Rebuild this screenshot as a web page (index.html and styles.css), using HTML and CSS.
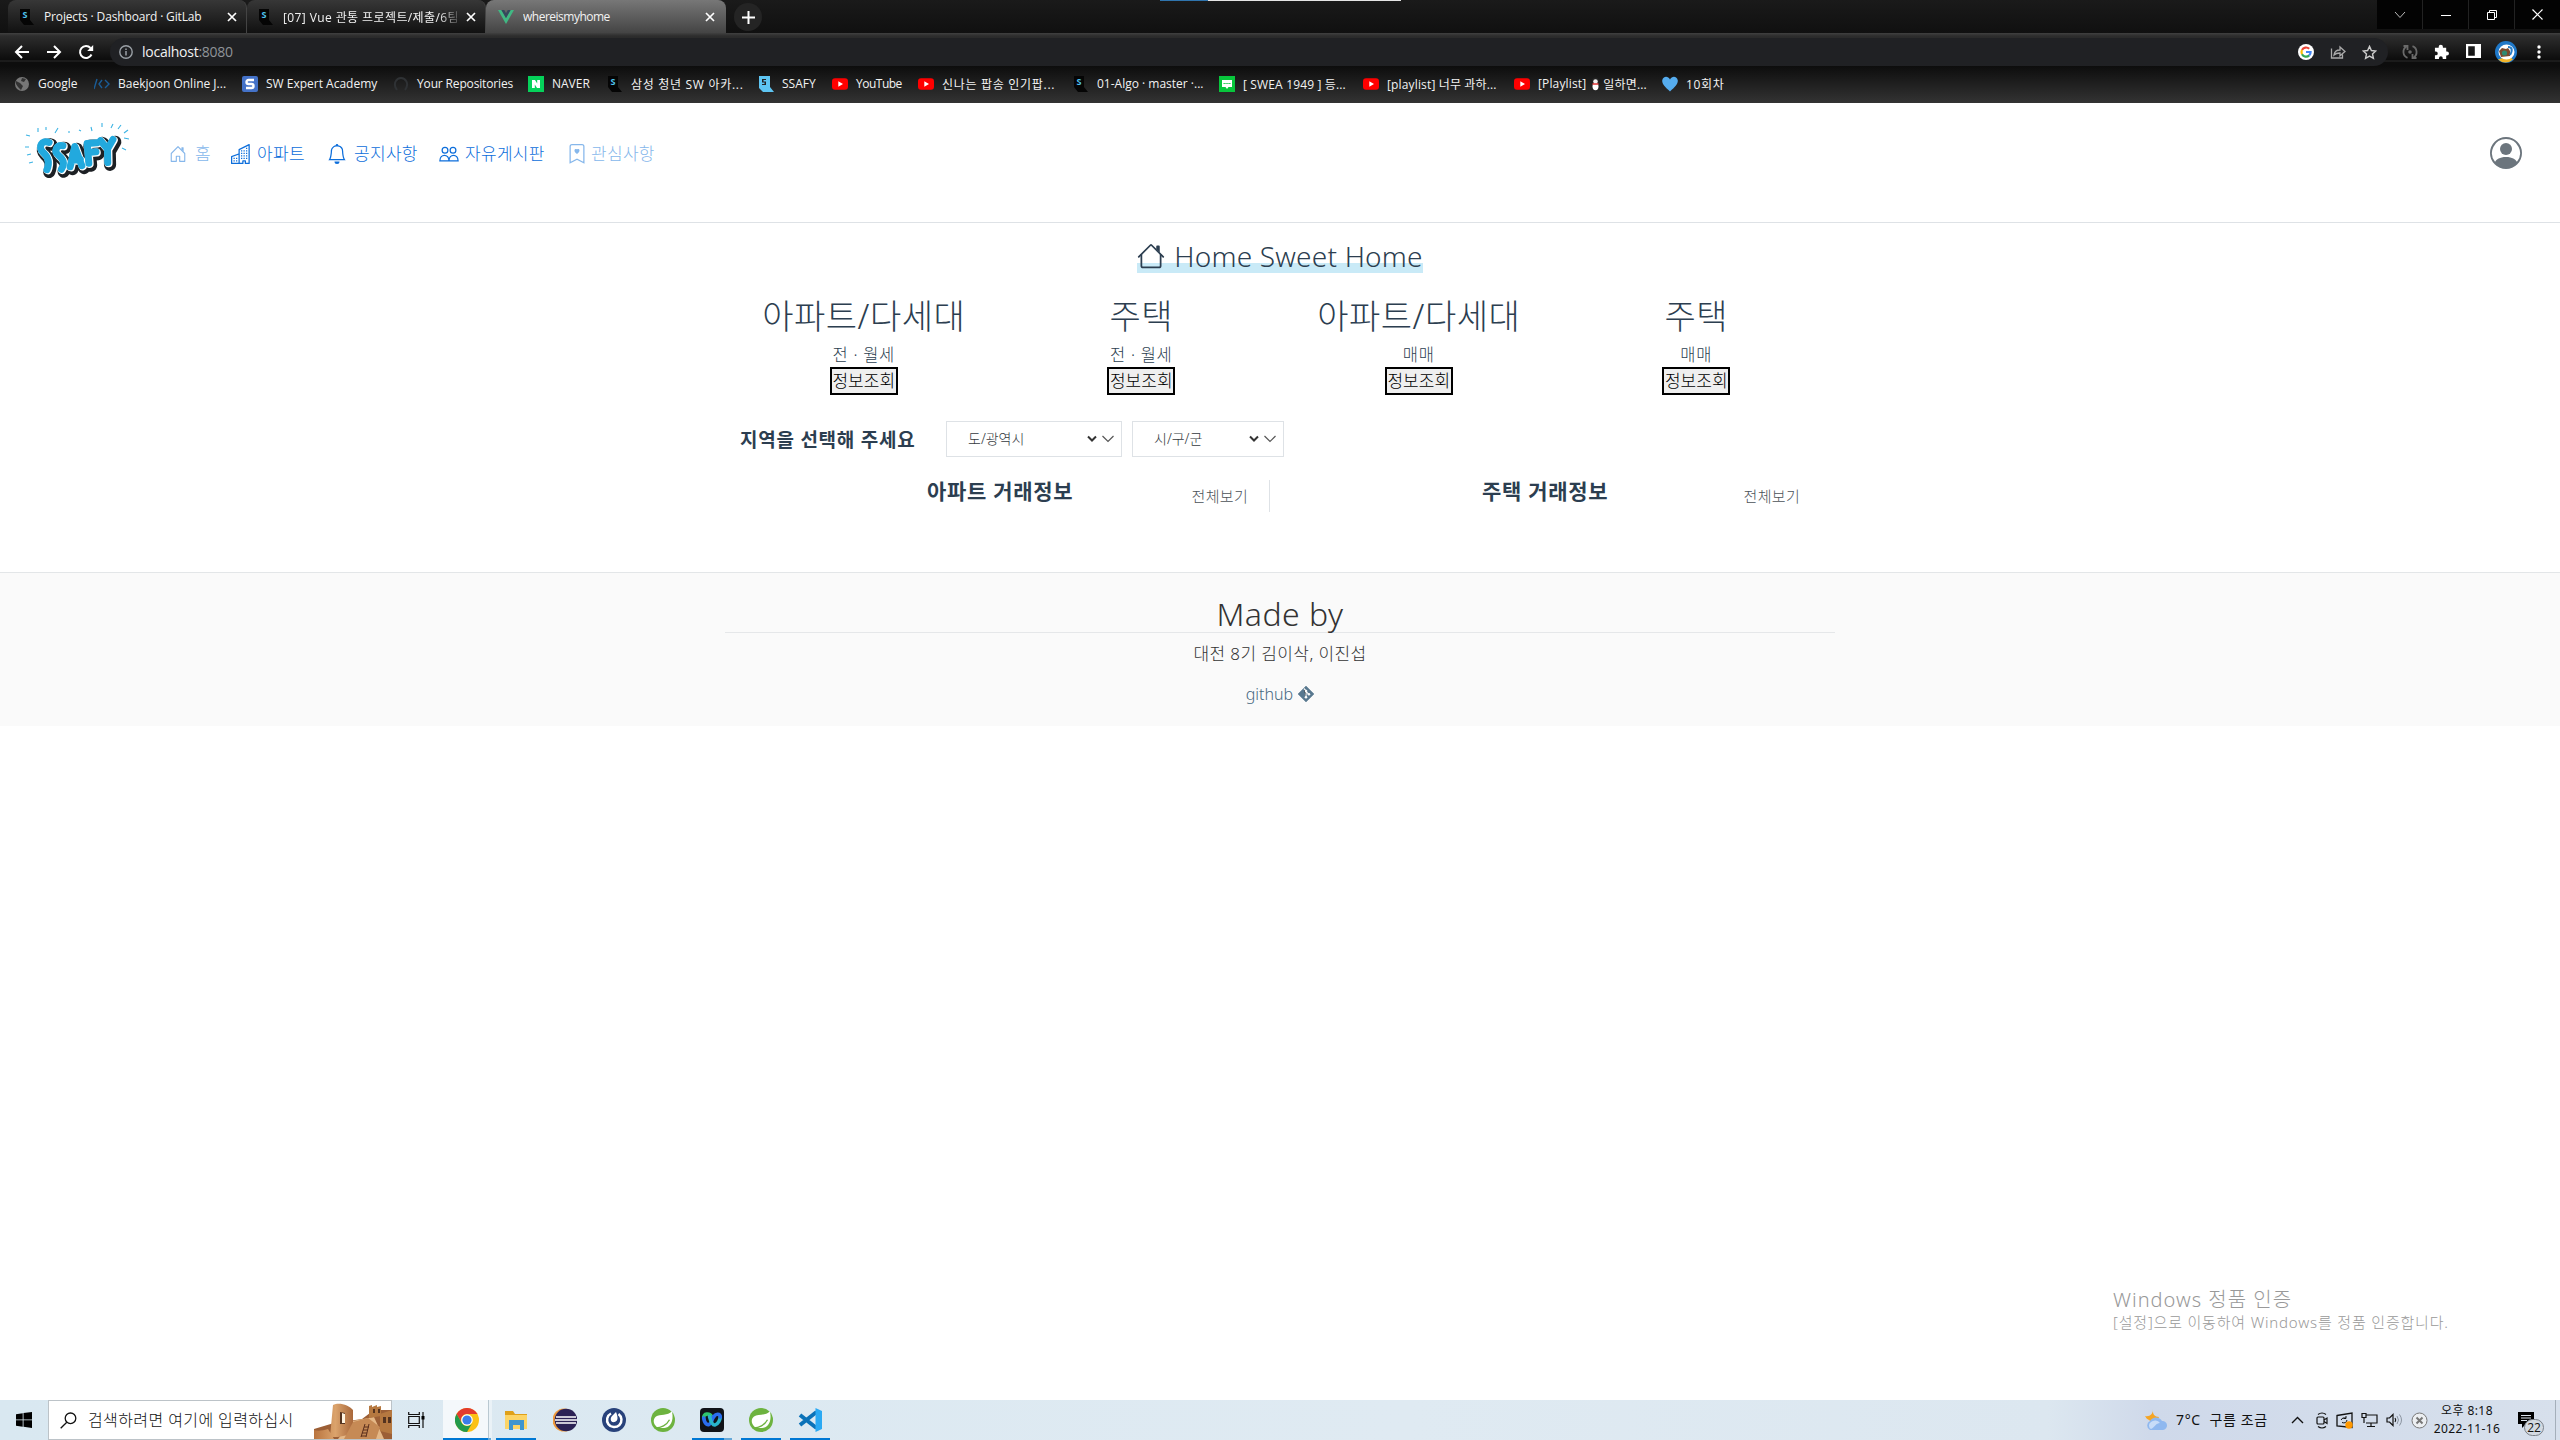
FILE: index.html
```html
<!DOCTYPE html>
<html lang="ko">
<head>
<meta charset="utf-8">
<title>whereismyhome</title>
<link rel="stylesheet" href="styles.css">
</head>
<body>
<svg class="defs" width="0" height="0">
  <defs>
    <symbol id="ssafy" viewBox="0 0 16 16"><path fill="#050505" d="M1 0h10v11l4 5H5l-4-5z"/><text x="3.5" y="8.5" font-size="9" font-weight="700" fill="#4fc3f0">S</text></symbol>
    <symbol id="yt" viewBox="0 0 16 16"><rect y="2.2" width="16" height="11.6" rx="3" fill="#f00"/><path fill="#fff" d="M6.3 5.3v5.4L11 8z"/></symbol>
    <symbol id="close" viewBox="0 0 10 10"><path d="M1 1l8 8M9 1L1 9" stroke="#fff" stroke-width="1.7"/></symbol>
    <symbol id="spring" viewBox="0 0 24 24"><circle cx="12" cy="12" r="12" fill="#6db33f"/><path fill="#fff" d="M20.8 3.2c1.7 5.3 1 15-6.300 16.600-3.500.8-7-.1-8.700-.8C1.800 15.500 1.900 11 5 8.600c3.800-2.700 12-.6 15.800-5.400z"/><path d="M3.500 19.800c6.500.5 12.500-3 15-8" stroke="#6db33f" stroke-width="1.300" fill="none"/></symbol>
  </defs>
</svg>

<div class="browser">
  <div class="tabstrip">
    <div class="tab">
      <svg class="fav" viewBox="0 0 16 16"><use href="#ssafy"/></svg>
      <span class="tab-title tight">Projects · Dashboard · GitLab</span>
      <svg class="x"><use href="#close"/></svg>
    </div>
    <div class="tab">
      <svg class="fav" viewBox="0 0 16 16"><use href="#ssafy"/></svg>
      <span class="tab-title fade">[07] Vue 관통 프로젝트/제출/6팀</span>
      <svg class="x"><use href="#close"/></svg>
    </div>
    <div class="tab active">
      <svg class="fav" viewBox="0 0 16 16"><path fill="#41b883" d="M0 1h3.400L8 9l4.600-8H16L8 15z"/><path fill="#35495e" d="M3.400 1h2.800L8 4.200 9.800 1h2.800L8 9z"/></svg>
      <span class="tab-title tighter">whereismyhome</span>
      <svg class="x"><use href="#close"/></svg>
    </div>
    <div class="newtab"><svg width="13" height="13" viewBox="0 0 13 13"><path d="M6.500 0v13M0 6.500h13" stroke="#fff" stroke-width="2"/></svg></div>
    <div class="controls">
      <span><svg width="12" height="12" viewBox="0 0 12 12"><path d="M1 3l5 5.500L11 3" stroke="#bbb" fill="none"/></svg></span>
      <span><svg width="10" height="12" viewBox="0 0 10 12"><path d="M0 6.500h10" stroke="#fff"/></svg></span>
      <span><svg width="10" height="10" viewBox="0 0 10 10"><path d="M.5 2.500h7v7h-7zM2.500 2.500v-2h7v7h-2" stroke="#fff" fill="none"/></svg></span>
      <span><svg width="11" height="11" viewBox="0 0 11 11"><path d="M.5.5l10 10M10.500.5l-10 10" stroke="#fff" stroke-width="1.200"/></svg></span>
    </div>
    <div class="topbar-mark"></div>
  </div>

  <div class="toolbar">
    <div class="nav-buttons">
      <svg width="16" height="16" viewBox="0 0 16 16"><path d="M15 8H2M8 2L2 8l6 6" stroke="#fff" stroke-width="2" fill="none"/></svg>
      <svg width="16" height="16" viewBox="0 0 16 16"><path d="M1 8h13M8 2l6 6-6 6" stroke="#fff" stroke-width="2" fill="none"/></svg>
      <svg width="16" height="16" viewBox="0 0 16 16"><path d="M13.500 10.500A6 6 0 1 1 12.500 4" stroke="#fff" stroke-width="2" fill="none"/><path fill="#fff" d="M15.200 1v6H9.200z"/></svg>
    </div>
    <div class="omnibox">
      <svg width="14" height="14" viewBox="0 0 14 14"><circle cx="7" cy="7" r="6.200" stroke="#9aa0a6" stroke-width="1.400" fill="none"/><path d="M7 6v4.500M7 3.400v1.500" stroke="#9aa0a6" stroke-width="1.500"/></svg>
      <span class="url">localhost<i>:8080</i></span>
      <svg class="g" width="16" height="16" viewBox="0 0 16 16"><circle cx="8" cy="8" r="8" fill="#fff"/><g fill="none" stroke-width="2.200"><path stroke="#ea4335" d="M4 6A4.600 4.600 0 0 1 11.200 4.700"/><path stroke="#fbbc05" d="M4 6a4.600 4.600 0 0 0 0 4.200"/><path stroke="#34a853" d="M4 10.200a4.600 4.600 0 0 0 7.200 1.200"/><path stroke="#4285f4" d="M11.200 11.400A4.600 4.600 0 0 0 12.600 8H8"/></g></svg>
      <svg width="16" height="16" viewBox="0 0 16 16"><path d="M1.500 4.500v9.500h11v-3.500M4 11c.5-4 3-5 6-5V3l5 4.500-5 4.300V9C7.500 9 5.500 9.500 4 11z" fill="none" stroke="#aaa" stroke-width="1.300"/></svg>
      <svg width="15" height="15" viewBox="0 0 16 16"><path d="M8 1.500l2 4.400 4.700.5-3.500 3.200 1 4.700L8 11.900l-4.200 2.400 1-4.700L1.300 6.400 6 5.900z" fill="none" stroke="#ccc" stroke-width="1.500"/></svg>
    </div>
    <div class="extensions">
      <svg width="16" height="16" viewBox="0 0 16 16"><g fill="none" stroke="#6a6a6a" stroke-width="1.800"><path d="M4.500 2.500A6.300 6.300 0 0 0 5.500 13.800M11.500 13.500A6.300 6.300 0 0 0 10.500 2.200"/><path d="M1.500 2h4v4M14.500 14h-4v-4"/></g><circle cx="8" cy="8" r="1.800" fill="#6a6a6a"/></svg>
      <svg width="15" height="15" viewBox="0 0 16 16"><path fill="#fff" d="M1 4h4V3a2 2 0 0 1 4.500 0v1H13v4h.8a2 2 0 0 1 0 4.300H13V16H9.300v-1a2 2 0 0 0-4 0v1H1v-4h1a2 2 0 0 0 0-4H1z"/></svg>
      <svg width="15" height="15" viewBox="0 0 15 15"><path fill="#fff" fill-rule="evenodd" d="M0 0h15v14H0zM2.200 2.200v9.600h6.600V2.200z"/></svg>
      <svg width="22" height="22" viewBox="0 0 22 22"><circle cx="11" cy="11" r="11" fill="#1f78c8"/><path fill="#f3b52b" d="M3 18.500a11 11 0 0 0 15 0L14 15z"/><ellipse cx="11.500" cy="11" rx="8" ry="7.500" fill="#fff"/><path fill="#7a4a2e" d="M4 10l3-3 4 1 2-1 2 3v5l-9 1z"/><circle cx="9.500" cy="12" r="2.600" fill="#2d8a72"/><path d="M13 6c4 0 5 3 2 8" fill="none" stroke="#287dc6" stroke-width="2"/></svg>
      <svg width="4" height="14" viewBox="0 0 4 14"><g fill="#fff"><circle cx="2" cy="2" r="1.700"/><circle cx="2" cy="7" r="1.700"/><circle cx="2" cy="12" r="1.700"/></g></svg>
    </div>
  </div>

  <div class="bookmarks">
    <a><svg viewBox="0 0 16 16"><circle cx="8" cy="8" r="7" fill="#777"/><path fill="#333" d="M2 5l4 2 3 3-2 4-3-3-2-3zM8 2l4 1-2 3-3-1z"/></svg>Google</a>
    <a><svg viewBox="0 0 16 16"><path d="M3 3L0 13M8 4L5 8l3 4M11 4l4 4-4 4" fill="none" stroke="#1a5c96" stroke-width="1.400"/></svg>Baekjoon Online J...</a>
    <a><svg viewBox="0 0 16 16"><rect width="16" height="16" rx="2" fill="#4472c8"/><path d="M12 4H6.500a2 2 0 0 0 0 4h3a2 2 0 0 1 0 4H4" stroke="#fff" stroke-width="2.400" fill="none"/></svg>SW Expert Academy</a>
    <a class="tight"><svg viewBox="0 0 16 16"><path d="M4 14C-1 7 4 2 8 2s9 5 4 12" fill="none" stroke="#2f3235" stroke-width="2"/></svg>Your Repositories</a>
    <a><svg viewBox="0 0 16 16"><rect width="16" height="16" fill="#05d25a"/><path fill="#fff" d="M4 4h3l2.200 3.500V4H12v8H9L6.800 8.500V12H4z"/></svg>NAVER</a>
    <a class="ko"><svg viewBox="0 0 16 16"><use href="#ssafy"/></svg>삼성 청년 SW 아카...</a>
    <a><svg viewBox="0 0 16 16"><path fill="#5ec5f2" d="M1 0h11v11l4 5H5l-4-4z"/><path fill="#222" d="M4 3h4v1H5.500v1.500H8V9H4V8h2.500V6.500H4z"/></svg>SSAFY</a>
    <a class="tighter"><svg viewBox="0 0 16 16"><use href="#yt"/></svg>YouTube</a>
    <a class="ko"><svg viewBox="0 0 16 16"><use href="#yt"/></svg>신나는 팝송 인기팝...</a>
    <a><svg viewBox="0 0 16 16"><use href="#ssafy"/></svg>01-Algo · master ·...</a>
    <a class="mix"><svg viewBox="0 0 16 16"><rect width="16" height="16" fill="#08c63c"/><path fill="#fff" d="M3 4h10v7H9.500L8 13l-1.500-2H3z"/><path d="M4.500 7.500h7" stroke="#08c63c" stroke-dasharray="1.300 .6"/></svg>[ SWEA 1949 ] 등...</a>
    <a class="mix"><svg viewBox="0 0 16 16"><use href="#yt"/></svg>[playlist] 너무 과하...</a>
    <a class="mix"><svg viewBox="0 0 16 16"><use href="#yt"/></svg><span>[Playlist]</span><svg class="penguin" viewBox="0 0 11 14"><circle cx="5.500" cy="4" r="3.600" fill="#222"/><ellipse cx="5.500" cy="9" rx="4.600" ry="4.800" fill="#222"/><circle cx="5.500" cy="4.500" r="2.300" fill="#eee"/><ellipse cx="5.500" cy="9.500" rx="3" ry="3.700" fill="#fff"/><path d="M2.500 7h6" stroke="#d33" stroke-width="1.500"/></svg>일하면...</a>
    <a class="ko"><svg viewBox="0 0 16 16"><path fill="#55acee" d="M8 15.500C3 11 0 8 .2 4.500 1 0 6-.5 8 3.500c2-4 7-3.500 7.800 1C16 8 13 11 8 15.500z"/></svg>10회차</a>
  </div>
</div>

<main class="page">
  <header class="site-header">
    <svg class="logo" viewBox="0 0 110 60" width="110" height="60">
      <path d="M15 7v4M23 6v3M35 7l-3 5M46 10v2M56 9l2 1M68 6l1 4M79 2v4M90 3l-2 4M98 4l-3 4M105 9l-4 3M106 18l-5-1M99 27l4 2M3 14l4 1M2 26h4M4 34l4-1M6 42l4-1" stroke="#3bb3e4" stroke-width="1.100"/>
      <g transform="translate(6.500 4.500) scale(.9) rotate(-5 52 34)" fill="none" stroke-linecap="round" stroke-linejoin="round">
        <g stroke="#1d2024" stroke-width="13.500" transform="translate(1.500 2)"><path id="letters" d="M24 17c-8-4-13 4-8 10 6 6 7 12 3 20M39 22c-7-2-11 5-6 10 5 5 7 9 2 16M45 46l7-22 6 22M48 39h9M66 44V22h11M66 32h9M81 20l7 10 7-10M88 30l-1 15"/></g>
        <use href="#letters" stroke="#fff" stroke-width="9"/>
        <use href="#letters" stroke="#22a9de" stroke-width="7.800" transform="translate(-.8 -.8)"/>
      </g>
    </svg>
    <nav class="menu">
      <a class="muted"><svg width="18" height="18" viewBox="0 0 16 16"><path d="M7.646 1.146a.5.5 0 0 1 .708 0l6 6a.5.5 0 0 1 .146.354v7a.5.5 0 0 1-.5.5H9.500a.5.5 0 0 1-.5-.5v-4H7v4a.5.5 0 0 1-.5.5H2a.5.5 0 0 1-.5-.5v-7a.5.5 0 0 1 .146-.354l6-6zM2.500 7.707V14H6v-4a.5.5 0 0 1 .5-.5h3a.5.5 0 0 1 .5.5v4h3.500V7.707L8 2.207l-5.500 5.500z"/><path d="M13 2.500V6l-2-2V2.500a.5.5 0 0 1 .5-.5h1a.5.5 0 0 1 .5.5z"/></svg>홈</a>
      <a><svg width="20" height="20" viewBox="0 0 16 16"><path d="M14.763.075A.5.5 0 0 1 15 .5v15a.5.5 0 0 1-.5.5h-3a.5.5 0 0 1-.5-.5V14h-1v1.500a.5.5 0 0 1-.5.5h-9a.5.5 0 0 1-.5-.5V10a.5.5 0 0 1 .342-.474L6 7.640V4.500a.5.5 0 0 1 .276-.447l8-4a.5.5 0 0 1 .487.022zM6 8.694L1 10.360V15h5V8.694zM7 15h2v-1.500a.5.5 0 0 1 .5-.5h2a.5.5 0 0 1 .5.5V15h2V1.309l-7 3.500V15z"/><path d="M2 11h1v1H2zm2 0h1v1H4zm-2 2h1v1H2zm2 0h1v1H4zm4-4h1v1H8zm2 0h1v1h-1zm-2 2h1v1H8zm2 0h1v1h-1zm2-2h1v1h-1zm0 2h1v1h-1zM8 7h1v1H8zm2 0h1v1h-1zm2 0h1v1h-1zM8 5h1v1H8zm2 0h1v1h-1zm2 0h1v1h-1zm0-2h1v1h-1z"/></svg>아파트</a>
      <a><svg width="20" height="20" viewBox="0 0 16 16"><path d="M8 16a2 2 0 0 0 2-2H6a2 2 0 0 0 2 2zM8 1.918l-.797.161A4.002 4.002 0 0 0 4 6c0 .628-.134 2.197-.459 3.742-.16.767-.376 1.566-.663 2.258h10.244c-.287-.692-.502-1.490-.663-2.258C12.134 8.197 12 6.628 12 6a4.002 4.002 0 0 0-3.203-3.920L8 1.917zM14.220 12c.223.447.481.801.78 1H1c.299-.199.557-.553.78-1C2.680 10.200 3 6.880 3 6c0-2.420 1.720-4.440 4.005-4.901a1 1 0 1 1 1.990 0A5.002 5.002 0 0 1 13 6c0 .88.32 4.200 1.220 6z"/></svg>공지사항</a>
      <a><svg width="20" height="20" viewBox="0 0 16 16"><g fill="none" stroke="currentColor"><circle cx="4.800" cy="5" r="2.300"/><circle cx="11.200" cy="5" r="2.300"/><path d="M.7 13.500c0-6 7.300-6 7.300 0zM8 13.500c0-6 7.300-6 7.300 0z"/></g></svg>자유게시판</a>
      <a class="muted"><svg width="20" height="20" viewBox="0 0 16 16"><path fill="none" stroke="currentColor" d="M2.500 15V2a1.500 1.500 0 0 1 1.500-1.500h8A1.500 1.500 0 0 1 13.500 2v13L8 12.200z"/><path d="M8 4.400c1.100-1.200 3.900.7 0 3.600-3.900-2.900-1.100-4.800 0-3.600z"/></svg>관심사항</a>
    </nav>
    <svg class="avatar" width="32" height="32" viewBox="0 0 16 16"><path d="M11 6a3 3 0 1 1-6 0 3 3 0 0 1 6 0z"/><path fill-rule="evenodd" d="M0 8a8 8 0 1 1 16 0A8 8 0 0 1 0 8zm8-7a7 7 0 0 0-5.468 11.370C3.242 11.226 4.805 10 8 10s4.757 1.225 5.468 2.370A7 7 0 0 0 8 1z"/></svg>
  </header>

  <div class="container">
    <h1 class="slogan"><span><svg width="28" height="28" viewBox="0 0 16 16"><path fill-rule="evenodd" d="M2 13.500V7h1v6.500a.5.5 0 0 0 .5.500h9a.5.5 0 0 0 .5-.5V7h1v6.500a1.500 1.500 0 0 1-1.500 1.500h-9A1.500 1.500 0 0 1 2 13.500zm11-11V6l-2-2V2.500a.5.5 0 0 1 .5-.5h1a.5.5 0 0 1 .5.500z"/><path d="M7.293 1.500a1 1 0 0 1 1.414 0l6.647 6.646a.5.5 0 0 1-.708.708L8 2.207 1.354 8.854a.5.5 0 1 1-.708-.708z"/></svg><b>Home Sweet Home</b></span></h1>

    <section class="types">
      <div><h2>아파트/다세대</h2><p>전 · 월세</p><button>정보조회</button></div>
      <div><h2>주택</h2><p>전 · 월세</p><button>정보조회</button></div>
      <div><h2>아파트/다세대</h2><p>매매</p><button>정보조회</button></div>
      <div><h2>주택</h2><p>매매</p><button>정보조회</button></div>
    </section>

    <section class="region">
      <strong>지역을 선택해 주세요</strong>
      <div class="select wide"><span>도/광역시</span><svg width="10" height="8" viewBox="0 0 10 8"><path d="M1 1.500l4 4 4-4" fill="none" stroke="#333" stroke-width="2"/></svg><svg width="14" height="8" viewBox="0 0 14 8"><path d="M1.500 1l5.500 5.500L12.500 1" fill="none" stroke="#555" stroke-width="1.200"/></svg></div>
      <div class="select"><span>시/구/군</span><svg width="10" height="8" viewBox="0 0 10 8"><path d="M1 1.500l4 4 4-4" fill="none" stroke="#333" stroke-width="2"/></svg><svg width="14" height="8" viewBox="0 0 14 8"><path d="M1.500 1l5.500 5.500L12.500 1" fill="none" stroke="#555" stroke-width="1.200"/></svg></div>
    </section>

    <section class="deals">
      <div class="deal first"><h3>아파트 거래정보</h3><a>전체보기</a></div>
      <div class="deal"><h3>주택 거래정보</h3><a>전체보기</a></div>
    </section>
  </div>

  <footer class="site-footer">
    <div class="footer-inner">
      <h2>Made by</h2>
      <p>대전 8기 김이삭, 이진섭</p>
      <a>github<svg width="16" height="16" viewBox="0 0 16 16"><path fill="#58788f" d="M8 0l8 8-8 8-8-8z" stroke="#58788f" stroke-linejoin="round" stroke-width=".5"/><path d="M5.800 2.500L8 4.800v6.500M8 5.500l2.700 2.700" stroke="#fafafa" stroke-width="1.100"/><g fill="#fafafa"><circle cx="8" cy="5" r="1.300"/><circle cx="8" cy="11.200" r="1.300"/><circle cx="10.900" cy="8.200" r="1.300"/></g></svg></a>
    </div>
  </footer>

  <div class="watermark"><b>Windows 정품 인증</b><span>[설정]으로 이동하여 Windows를 정품 인증합니다.</span></div>
</main>

<div class="taskbar">
  <div class="start"><svg width="16" height="16" viewBox="0 0 16 16"><path d="M0 2.200l6.700-1v6.300H0zM7.500 1.100L16 0v7.500H7.500zM0 8.300h6.700v6.400l-6.700-1zM7.500 8.300H16V16l-8.500-1.200z"/></svg></div>
  <div class="search">
    <svg width="17" height="17" viewBox="0 0 17 17"><circle cx="10.500" cy="6.300" r="5.300" fill="none" stroke="#111" stroke-width="1.300"/><path d="M6.800 10.200L.7 16.300" stroke="#111" stroke-width="1.300"/></svg>
    <span>검색하려면 여기에 입력하십시</span>
    <svg class="art" width="78" height="36" viewBox="0 0 78 36">
      <defs><linearGradient id="sand"><stop offset="0" stop-color="#b9743f"/><stop offset=".55" stop-color="#dba36c"/><stop offset="1" stop-color="#a9683b"/></linearGradient></defs>
      <path fill="#9c5f36" d="M0 36V26l10-3 10-3 28-4 12-9h18v29z"/>
      <path fill="#e5b887" d="M24 36l14-18 22-4 10 22z"/>
      <path fill="url(#sand)" d="M0 36V27c3 1 8 1 14-1l6 10zM16 34L19 2c6-3 16 0 20 5v24L24 34z"/>
      <path fill="#c68a55" d="M39 19l15-4 12 9-4 12H30z"/>
      <path fill="#b57840" d="M55 3l3-1v2l5-2v2l4-1v10l-12 2zM66 11l12-4v24l-12-3z"/>
      <path fill="#54331f" d="M26 9l5 1v11h-5zM59 6h2v4h-2zM64 6h2v4h-2zM69 14h3v6h-3zM74 14h3v6h-3z"/><path fill="#fff3df" d="M28 10l3 1v9h-3z"/>
      <path d="M47 34l4-13M52 34l3-13M50 24h5M49 27h5M48 30h5M47 33h5" stroke="#5b2f1d" fill="none"/>
    </svg>
  </div>
  <div class="taskview"><svg width="17" height="16" viewBox="0 0 17 16"><path d="M.7 0v2.500h10.600V0M.7 16v-2.500h10.600V16M.7 4.500h10.600v7H.7zM15 0v16" fill="none" stroke="#111" stroke-width="1.200"/><path d="M13.500 4h3v3.500h-3z"/></svg></div>
  <div class="apps">
    <div class="app open front"><svg viewBox="0 0 24 24"><circle cx="12" cy="12" r="12" fill="#fbc116"/><path fill="#e33b2e" d="M1.600 6A12 12 0 0 1 22.400 6H12a6 6 0 0 0-5.200 9z"/><path fill="#229a4b" d="M1.600 6A12 12 0 0 0 12 24l5.200-9a6 6 0 0 1-10.400 0z"/><circle cx="12" cy="12" r="5.800" fill="#fff"/><circle cx="12" cy="12" r="4.600" fill="#3b7de9"/></svg></div>
    <div class="app open"><svg viewBox="0 0 24 24"><path fill="#dfa019" d="M1 3h8l2 3h12v4H1z"/><path fill="#fcd466" d="M1 7h22v14H1z"/><path fill="#3f95cf" d="M5 12h15v10h-4v-5H9v5H5z"/></svg></div>
    <div class="app"><svg viewBox="0 0 24 24"><circle cx="11" cy="12" r="11.500" fill="#f09a3c"/><circle cx="13" cy="12" r="11.300" fill="#2c2255"/><path d="M3 9h20M2 12h22M3 15h20" stroke="#fff" stroke-width="1.500"/></svg></div>
    <div class="app"><svg viewBox="0 0 24 24"><circle cx="12" cy="12" r="12" fill="#28427b"/><path d="M9 5.500a7.200 7.200 0 1 0 7.500.6" fill="none" stroke="#fff" stroke-width="2.500"/><path fill="#fff" d="M14 4c2 5 2.500 9-1.500 10s-5-4-2-6.500z"/></svg></div>
    <div class="app"><svg viewBox="0 0 24 24"><use href="#spring"/></svg></div>
    <div class="app open stacked"><svg viewBox="0 0 24 24"><rect width="24" height="24" rx="4" fill="#101318"/><g fill="none" stroke-width="3.600" stroke-linecap="round"><path d="M12 9C9.500 4.500 3 5.500 3.700 10" stroke="#2fc56e"/><path d="M3.700 10C4.500 16 8.500 19 11 14.500l2.500-6" stroke="#2a6df0"/><path d="M9.500 8.500c1 4 2.500 9 5.500 8.500 3-.5 5-5 5.300-8" stroke="#29b4c9"/><path d="M20.300 9C20 5.500 16 5.500 14 8.500" stroke="#2a6df0"/></g></svg></div>
    <div class="app open"><svg viewBox="0 0 24 24"><use href="#spring"/></svg></div>
    <div class="app open"><svg viewBox="0 0 24 24"><path d="M18.500 4L2 17M18.500 20L2 7" stroke="#0b72b8" stroke-width="4"/><path fill="#2aa9f3" d="M17.500 0L24 3v18l-6.500 3z"/></svg></div>
  </div>
  <div class="tray">
    <svg width="24" height="22" viewBox="0 0 24 22"><path fill="#f5a524" d="M9 0c-1 5 2 8 6 8-1 3-7 6-10 3-2-1-3-2-4-4 5 1 8-2 8-7z"/><path fill="#8fb8ef" d="M6 21a5 5 0 0 1 0-9 7 7 0 0 1 12 0 4.500 4.500 0 0 1 1 9z"/><path fill="#c7dcf8" d="M7 20a4 4 0 0 1 0-7 6 6 0 0 1 9 1c-4 0-5 4-9 6z"/></svg>
    <span class="weather">7°C&nbsp; 구름 조금</span>
    <svg class="up" width="13" height="8" viewBox="0 0 13 8"><path d="M1 7l5.500-5.500L12 7" fill="none" stroke="#111" stroke-width="1.400"/></svg>
    <svg width="12" height="17" viewBox="0 0 12 17"><g fill="none" stroke="#111" stroke-width="1.200"><rect x="1" y="5" width="7" height="7" rx="1"/><path d="M8 8l3-2v5.500L8 9.500M2 2.500q4-3 8 0M2 14.500q4 3 8 0"/></g></svg>
    <svg width="17" height="17" viewBox="0 0 17 17"><path d="M1 3.500L16 1v14.500L1 14z" fill="none" stroke="#111" stroke-width="1.300"/><path d="M5 8q1-3 5-2M10 4v2.500H7.500M11 8q-1 4-5 2.500" fill="none" stroke="#111"/><circle cx="13" cy="13" r="3.700" fill="#ff9800"/></svg>
    <svg width="17" height="16" viewBox="0 0 17 16"><path d="M5 3h11v8H5M10 11v3M6 14.500h8M1 1.500h4v4H1zM3 5.500V11" fill="none" stroke="#111" stroke-width="1.200"/></svg>
    <svg width="17" height="14" viewBox="0 0 17 14"><path d="M1 5h2.500L7 1.500v11L3.500 9H1zM9 5q1.500 2 0 4" fill="none" stroke="#111" stroke-width="1.200"/><path d="M11 3q3 4 0 8M13.500 1.500q4 5.500 0 11" fill="none" stroke="#8b94a0"/></svg>
    <svg width="17" height="17" viewBox="0 0 17 17"><circle cx="8.500" cy="8.500" r="7.500" fill="#eceff2" stroke="#777"/><path d="M5.500 5.500l6 6M11.500 5.500l-6 6" stroke="#777" stroke-width="2"/></svg>
    <div class="clock"><span>오후 8:18</span><span>2022-11-16</span></div>
    <div class="notice"><svg width="16" height="16" viewBox="0 0 16 16"><path d="M0 0h16v12H8l-4 4v-4H0z"/><path d="M3 3.500h10M3 6h10M3 8.500h6" stroke="#dde4ee"/></svg><em>22</em></div>
  </div>
</div>
</body>
</html>
```
FILE: styles.css
```css
* { box-sizing: border-box; }
body {
  margin: 0;
  width: 2560px;
  height: 1440px;
  overflow: hidden;
  display: flex;
  flex-direction: column;
  background: #fff;
  color: #2c3e50;
  font-family: "Noto Sans", "Noto Sans CJK KR", sans-serif;
  font-weight: 300;
}
h1, h2, h3, p { margin: 0; font-weight: 300; }
svg { flex: none; display: block; }
.defs { position: absolute; }

/* browser chrome */
.browser { height: 103px; color: #f2f2f2; font-family: "Open Sans", "Noto Sans CJK KR", sans-serif; font-size: 12px; font-weight: 400; }
.tabstrip {
  height: 33px;
  display: flex;
  padding-left: 8px;
  background: linear-gradient(#1a1a1a, #101010);
  position: relative;
}
.tab {
  width: 239px;
  display: flex;
  align-items: center;
  padding: 0 9px 0 11px;
  border-radius: 8px 8px 0 0;
  background: linear-gradient(#373737, #111);
  border-right: 1px solid #444;
}
.tab.active { width: 240px; border: 0; padding-right: 11px; background: linear-gradient(#777, #444); }
.tab.active .fav { margin-left: 1px; }
.fav { width: 16px; height: 16px; margin-right: 9px; }
.tab-title { width: 178px; margin-right: 6px; overflow: hidden; white-space: nowrap; }
.tab .x { width: 10px; height: 10px; margin-left: auto; }
.fade { letter-spacing: .4px; -webkit-mask-image: linear-gradient(90deg, #000 88%, transparent 102%); mask-image: linear-gradient(90deg, #000 88%, transparent 102%); }
.tight { letter-spacing: -.15px; }
.tighter { letter-spacing: -.5px; }
.newtab {
  width: 28px; height: 28px; margin: 3px 0 0 8px;
  border-radius: 50%;
  background: #242424;
  display: flex; align-items: center; justify-content: center;
}
.controls { margin-left: auto; display: flex; height: 29px; background: #030303; }
.controls span { width: 46px; display: flex; align-items: center; justify-content: center; border-left: 1px solid #222; }
.controls span:first-child { width: 45px; border: 0; }
.topbar-mark {
  position: absolute; left: 1160px; top: 0; width: 241px; height: 1px;
  background: linear-gradient(90deg, #2f74ad 48px, #e5e5e5 48px);
}
.toolbar { height: 33px; display: flex; background: linear-gradient(#404040, #2d2d2d 3px, #0c0c0c 27px, #2a2a2a 28px, #0d0d0d 29px); }
.nav-buttons { width: 110px; display: flex; gap: 16px; padding: 11px 0 0 14px; }
.omnibox {
  width: 2278px; height: 28px; margin-top: 5px;
  border-radius: 14px;
  background: #202124;
  display: flex; align-items: center;
  padding: 0 11px 0 9px;
  gap: 16px;
}
.omnibox .url { margin: -2px 0 0 -7px; font-size: 14px; letter-spacing: -.25px; }
.url i { font-style: normal; color: #8f9499; }
.omnibox .g { margin-left: auto; }
.extensions { flex: 1; display: flex; align-items: center; padding: 4px 0 0 14px; }
.extensions svg { margin-right: 17px; }
.extensions svg:first-child { margin-right: 16px; }
.extensions svg:nth-child(3) { margin-right: 14px; }
.extensions svg:nth-child(4) { margin-right: 20px; }
.extensions svg:last-child { margin: 0; }
.bookmarks {
  height: 37px;
  display: grid;
  grid-template-columns: 80px 148px 151px 135px 79px 151px 74px 86px 155px 146px 144px 151px 148px 80px;
  align-items: center;
  padding: 0 0 2px 14px;
  background: linear-gradient(#0d0d0d, #333);
}
.bookmarks a { display: flex; align-items: center; white-space: nowrap; }
.bookmarks a > svg { width: 16px; height: 16px; margin-right: 8px; }
.bookmarks a > .penguin { width: 11px; height: 14px; margin: 0 2px 0 4px; }
.ko { letter-spacing: .7px; }
.mix { letter-spacing: .15px; }

/* site header */
.page { height: 1297px; display: flex; flex-direction: column; position: relative; }
.site-header { height: 120px; display: flex; border-bottom: 1px solid #dee2e6; }
.logo { margin: 18px 0 0 23px; }
.menu { display: grid; grid-template-columns: 62px 97px 111px 128px 100px; height: 22px; margin: 40px 0 0 36px; }
.menu a { display: flex; align-items: center; height: 22px; gap: 6px; font-size: 17px; line-height: 22px; letter-spacing: .3px; color: #0d6edb; white-space: nowrap; }
.menu a:first-child { gap: 8px; }
.menu a:nth-child(3) svg { margin: 0 1px 0 -1px; }
.menu a:nth-child(5) { gap: 4px; }
.menu svg, .avatar, .slogan svg { fill: currentColor; }
.menu .muted { color: #86b7eb; }
.avatar { margin: 34px 38px 0 auto; color: #6c757d; }

/* main content */
.container { width: 1110px; margin: 0 auto; height: 349px; }
.slogan { height: 65px; padding-top: 14px; display: flex; justify-content: center; font-size: 28px; line-height: 38px; letter-spacing: .2px; }
.slogan span { display: flex; align-items: center; height: 36px; gap: 9px; background: linear-gradient(transparent 26px, #c9eaf7 26px); }
.slogan svg { margin-top: 2px; }
.slogan b { font-weight: 300; margin-top: 2px; }
.types { display: grid; grid-template-columns: repeat(4, 277.500px); text-align: center; height: 107px; }
.types h2 { font-size: 34px; line-height: 57px; height: 54px; letter-spacing: .5px; }
.types p { font-size: 16.500px; line-height: 26px; letter-spacing: .7px; }
.types button {
  display: block; margin: -1px auto 0; width: 68px; height: 28px; padding: 0;
  border: 2px solid #000; background: #efefef; color: #000;
  font: inherit; font-size: 17px; line-height: 22px; letter-spacing: 0;
}
.region { display: flex; align-items: center; height: 36px; margin-top: 26px; padding-left: 15px; }
.region strong { width: 206px; font-size: 19px; font-weight: 700; letter-spacing: .75px; }
.select { width: 152px; height: 36px; border: 1px solid #dee2e6; display: flex; align-items: center; padding: 0 6px 0 21px; color: #343a40; font-size: 14px; }
.select.wide { width: 176px; margin-right: 10px; }
.select span { margin: -2px auto 0 0; }
.select svg + svg { margin-left: 4px; }
.deals { display: grid; grid-template-columns: 545px 555px; margin-top: 23px; }
.deal { height: 32px; display: flex; padding-left: 202px; }
.deal:last-child { padding-left: 212px; }
.deal.first { border-right: 1px solid #dee2e6; }
.deal h3 { font-size: 21px; line-height: 22px; font-weight: 700; letter-spacing: .7px; }
.deal a { margin: 6px 21px 0 auto; font-size: 15px; line-height: 20px; letter-spacing: .3px; color: #4b5258; }
.deal:last-child a { margin-right: 25px; }

/* footer */
.site-footer { height: 154px; border-top: 1px solid #e3e6e8; background: #fafafa; }
.footer-inner { width: 1110px; margin: 0 auto; display: flex; flex-direction: column; align-items: center; color: #333; font-size: 17px; }
.footer-inner h2 { width: 100%; height: 60px; padding-top: 18px; text-align: center; font-size: 32px; line-height: 45px; letter-spacing: .5px; border-bottom: 1px solid #e5e7e9; }
.footer-inner p { font-size: 17px; letter-spacing: .4px; line-height: 41px; }
.footer-inner a { display: flex; align-items: center; gap: 5px; height: 40px; font-size: 16px; color: #46687f; }

.watermark { position: absolute; left: 2113px; top: 1183px; display: flex; flex-direction: column; color: #999; font-size: 15px; line-height: 19px; letter-spacing: .82px; white-space: nowrap; }
.watermark b { font-size: 20px; line-height: 27px; font-weight: 300; letter-spacing: 1px; }

/* taskbar */
.taskbar { height: 40px; display: flex; color: #111; background: linear-gradient(90deg, #d9e8f1, #dfeaf2 55%, #dce7f0 80%, #cfd9ea 84%, #d7e0ec); }
.start { width: 48px; padding: 12px 16px; }
.search { width: 344px; border: 1px solid #bcc3c8; background: #fff; display: flex; align-items: center; padding-left: 11px; font-size: 16px; letter-spacing: .4px; }
.search span { margin: -2px 0 0 11px; white-space: nowrap; }
.art { margin: auto -1px 0 auto; }
.taskview { width: 48px; padding: 12px 16px; }
.apps { display: flex; padding-left: 2px; }
.app { width: 49px; height: 40px; padding: 8px 0 0 12px; position: relative; }
.app svg { width: 24px; height: 24px; }
.app.front { width: 50px; padding-left: 13px; background: linear-gradient(90deg, transparent 1px, #f4f8fb 1px, #f4f8fb 46px, #b9c8d1 46px, #b9c8d1 47px, #eaf2f7 47px); }
.app.open::after { content: ""; position: absolute; left: 4px; bottom: 0; width: 40px; height: 2px; background: #0078d4; }
.app.front::after { left: 1px; width: 48px; background: linear-gradient(90deg, #0078d4 45px, #65a8d8 45px); }
.app.stacked::after { background: linear-gradient(90deg, #0078d4 32px, #65a8d8 32px); }
.tray { margin-left: auto; display: flex; align-items: center; gap: 8px; padding-right: 5px; font-size: 12px; font-weight: 400; position: relative; }
.tray::after { content: ""; position: absolute; right: 4px; top: 0; height: 40px; width: 1px; background: #a5afba; }
.weather { width: 107px; margin-top: -2px; font-size: 14px; letter-spacing: .65px; white-space: nowrap; }
.up { margin-right: 4px; }
.clock { width: 70px; margin: 0 2px 0 -4px; display: flex; flex-direction: column; align-items: center; line-height: 18px; letter-spacing: .4px; }
.notice { width: 37px; margin-left: 6px; position: relative; }
.notice em { position: absolute; left: 6px; top: 7px; width: 20px; height: 17px; border: 1px solid #7a8088; border-radius: 9px; background: #d4dae2; font: 12px/15px "Open Sans", sans-serif; text-align: center; }
```
